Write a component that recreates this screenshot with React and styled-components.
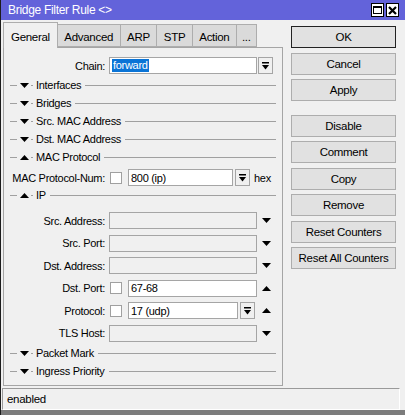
import styled, { createGlobalStyle } from "styled-components";

const GlobalStyle = createGlobalStyle`
  html, body {
    margin: 0;
    padding: 0;
    background: #f0f0f0;
  }
  body {
    font-family: "Liberation Sans", Arial, sans-serif;
    font-size: 11px;
    letter-spacing: -0.3px;
    color: #000;
  }
  * { box-sizing: border-box; }
`;

const DownTri = () => (
  <svg width="9" height="5" viewBox="0 0 9 5">
    <polygon points="0,0 9,0 4.5,5" fill="#000" />
  </svg>
);

const UpTri = () => (
  <svg width="9" height="5" viewBox="0 0 9 5">
    <polygon points="0,5 9,5 4.5,0" fill="#000" />
  </svg>
);

const DropIcon = () => (
  <svg width="7" height="8" viewBox="0 0 7 8">
    <rect x="0" y="0" width="7" height="1.5" fill="#000" />
    <polygon points="0,3 7,3 3.5,7.5" fill="#000" />
  </svg>
);

const App = () => {
  return (
    <>
      <GlobalStyle />
      <Window>
        <TitleBar>
          <span>Bridge Filter Rule &lt;&gt;</span>
          <TitleButtons>
            <TitleBtn>
              <MaxBox />
            </TitleBtn>
            <TitleBtn>
              <svg width="9" height="9" viewBox="0 0 9 9">
                <path d="M1 1 L8 8 M8 1 L1 8" stroke="#000" strokeWidth="2.2" />
              </svg>
            </TitleBtn>
          </TitleButtons>
        </TitleBar>

        <Body>
          <LeftCol>
            <TabRow>
              <Tab $active>General</Tab>
              <Tab>Advanced</Tab>
              <Tab>ARP</Tab>
              <Tab>STP</Tab>
              <Tab>Action</Tab>
              <Tab $pad={5}>...</Tab>
            </TabRow>
            <Panel>
              <FieldRow>
                <Label>Chain:</Label>
                <Input $w={148}>
                  <Selected>forward</Selected>
                </Input>
                <DropBtn $ml={1}>
                  <DropIcon />
                </DropBtn>
              </FieldRow>

              <Section $mt={2}>
                <Dash $w={7} />
                <TriBox><DownTri /></TriBox>
                <Dash $w={2} />
                <SectionLabel>Interfaces</SectionLabel>
                <Rule />
              </Section>
              <Section>
                <Dash $w={7} />
                <TriBox><DownTri /></TriBox>
                <Dash $w={2} />
                <SectionLabel>Bridges</SectionLabel>
                <Rule />
              </Section>
              <Section>
                <Dash $w={7} />
                <TriBox><DownTri /></TriBox>
                <Dash $w={2} />
                <SectionLabel>Src. MAC Address</SectionLabel>
                <Rule />
              </Section>
              <Section>
                <Dash $w={7} />
                <TriBox><DownTri /></TriBox>
                <Dash $w={2} />
                <SectionLabel>Dst. MAC Address</SectionLabel>
                <Rule />
              </Section>
              <Section>
                <Dash $w={7} />
                <TriBox><UpTri /></TriBox>
                <Dash $w={2} />
                <SectionLabel>MAC Protocol</SectionLabel>
                <Rule />
              </Section>

              <FieldRow $mt={3}>
                <Label>MAC Protocol-Num:</Label>
                <Check />
                <Input $w={105} $ml={6}>800 (ip)</Input>
                <DropBtn $ml={2}>
                  <DropIcon />
                </DropBtn>
                <Unit>hex</Unit>
              </FieldRow>

              <Section>
                <Dash $w={7} />
                <TriBox><UpTri /></TriBox>
                <Dash $w={2} />
                <SectionLabel>IP</SectionLabel>
                <Rule />
              </Section>

              <FieldRow $mt={8}>
                <Label>Src. Address:</Label>
                <Input $w={148} $disabled />
                <Arrow $ml={5}><DownTri /></Arrow>
              </FieldRow>
              <FieldRow $mt={5.5}>
                <Label>Src. Port:</Label>
                <Input $w={148} $disabled />
                <Arrow $ml={5}><DownTri /></Arrow>
              </FieldRow>
              <FieldRow $mt={5.5}>
                <Label>Dst. Address:</Label>
                <Input $w={148} $disabled />
                <Arrow $ml={5}><DownTri /></Arrow>
              </FieldRow>
              <FieldRow $mt={5.5}>
                <Label>Dst. Port:</Label>
                <Check />
                <Input $w={129} $ml={6}>67-68</Input>
                <Arrow $ml={5}><UpTri /></Arrow>
              </FieldRow>
              <FieldRow $mt={5.5}>
                <Label>Protocol:</Label>
                <Check />
                <Input $w={110} $ml={6}>17 (udp)</Input>
                <DropBtn $ml={2}>
                  <DropIcon />
                </DropBtn>
                <Arrow $ml={7}><UpTri /></Arrow>
              </FieldRow>
              <FieldRow $mt={5.5}>
                <Label>TLS Host:</Label>
                <Input $w={148} $disabled />
                <Arrow $ml={5}><DownTri /></Arrow>
              </FieldRow>

              <Section $mt={2.5}>
                <Dash $w={7} />
                <TriBox><DownTri /></TriBox>
                <Dash $w={2} />
                <SectionLabel>Packet Mark</SectionLabel>
                <Rule />
              </Section>
              <Section>
                <Dash $w={7} />
                <TriBox><DownTri /></TriBox>
                <Dash $w={2} />
                <SectionLabel>Ingress Priority</SectionLabel>
                <Rule />
              </Section>
            </Panel>
          </LeftCol>

          <ButtonCol>
            <Button $default>OK</Button>
            <Button>Cancel</Button>
            <Button>Apply</Button>
            <Button $mt={9}>Disable</Button>
            <Button>Comment</Button>
            <Button>Copy</Button>
            <Button>Remove</Button>
            <Button>Reset Counters</Button>
            <Button>Reset All Counters</Button>
          </ButtonCol>
        </Body>

        <StatusBar>enabled</StatusBar>
        <BottomStrip />
      </Window>
    </>
  );
};

const Window = styled.div`
  width: 405px;
  height: 415px;
  display: flex;
  flex-direction: column;
  border-left: 1px solid #1c1c1c;
  background: #f0f0f0;
  overflow: hidden;
`;

const TitleBar = styled.div`
  height: 20px;
  flex: none;
  display: flex;
  align-items: center;
  padding-left: 7px;
  background: #6363da;
  color: #fff;
  font-size: 12px;
`;

const TitleButtons = styled.div`
  margin-left: auto;
  margin-right: 6px;
  display: flex;
  gap: 2px;
`;

const TitleBtn = styled.div`
  width: 13px;
  height: 14px;
  background: #fff;
  border: 1px solid #000;
  display: flex;
  align-items: center;
  justify-content: center;
`;

const MaxBox = styled.div`
  width: 9px;
  height: 8px;
  border: 1px solid #000;
  border-top-width: 2px;
`;

const Body = styled.div`
  height: 368px;
  flex: none;
  display: flex;
`;

const LeftCol = styled.div`
  width: 280px;
  margin-left: 2px;
  padding-top: 3px;
  padding-bottom: 2px;
  display: flex;
  flex-direction: column;
`;

const TabRow = styled.div`
  height: 24px;
  display: flex;
  align-items: flex-end;
`;

const Tab = styled.div`
  position: relative;
  z-index: ${(p) => (p.$active ? 1 : 0)};
  height: ${(p) => (p.$active ? "26px" : "23px")};
  margin-bottom: ${(p) => (p.$active ? "-1px" : "0")};
  padding: ${(p) => (p.$active ? "3px 7px 0" : `2px ${p.$pad || 6.5}px 0`)};
  display: flex;
  align-items: center;
  font-size: 11.5px;
  background: ${(p) => (p.$active ? "#f0f0f0" : "#dadada")};
  border: 1px solid #adadad;
  border-left: ${(p) => (p.$active ? "1px solid #adadad" : "none")};
  border-bottom: ${(p) => (p.$active ? "none" : "1px solid #adadad")};
`;

const Panel = styled.div`
  flex: 1;
  border: 1px solid #a5a5a5;
  background: #f0f0f0;
  padding-top: 9px;
  display: flex;
  flex-direction: column;
`;

const FieldRow = styled.div`
  height: 17px;
  margin-top: ${(p) => p.$mt || 0}px;
  display: flex;
  align-items: center;
`;

const Label = styled.div`
  width: 101px;
  margin-right: 4px;
  text-align: right;
  white-space: nowrap;
`;

const Input = styled.div`
  width: ${(p) => p.$w}px;
  height: 17px;
  margin-left: ${(p) => p.$ml || 0}px;
  padding-left: 2px;
  display: flex;
  align-items: center;
  background: ${(p) => (p.$disabled ? "#f0f0f0" : "#fff")};
  border: 1px solid #a5a5a5;
  white-space: nowrap;
`;

const Selected = styled.span`
  background: #0a74d6;
  color: #fff;
  padding: 0 1px;
  line-height: 13px;
`;

const DropBtn = styled.div`
  width: 15px;
  height: 17px;
  margin-left: ${(p) => p.$ml || 0}px;
  display: flex;
  align-items: center;
  justify-content: center;
  background: #f0f0f0;
  border: 1px solid #a5a5a5;
`;

const Check = styled.div`
  width: 12px;
  height: 12px;
  margin-left: 1px;
  background: #fff;
  border: 1px solid #a0a0a0;
`;

const Unit = styled.span`
  margin-left: 4px;
`;

const Arrow = styled.div`
  margin-left: ${(p) => p.$ml || 0}px;
  display: flex;
  align-items: center;
`;

const Section = styled.div`
  height: 18px;
  margin-top: ${(p) => p.$mt || 0}px;
  padding: 0 6px;
  display: flex;
  align-items: center;
`;

const Dash = styled.div`
  width: ${(p) => p.$w}px;
  height: 1px;
  background: #a0a0a0;
  flex: none;
`;

const TriBox = styled.div`
  margin: 0 2px 0 3px;
  display: flex;
  align-items: center;
`;

const SectionLabel = styled.span`
  margin-left: 3px;
  margin-right: 4px;
  white-space: nowrap;
`;

const Rule = styled.div`
  flex: 1;
  height: 1px;
  background: #a0a0a0;
`;

const ButtonCol = styled.div`
  width: 105px;
  margin-left: 8px;
  padding-top: 6px;
  display: flex;
  flex-direction: column;
  gap: 4.5px;
`;

const Button = styled.div`
  height: 22px;
  margin-top: ${(p) => p.$mt || 0}px;
  display: flex;
  align-items: center;
  justify-content: center;
  background: #e1e1e1;
  border: 1px solid ${(p) => (p.$default ? "#222" : "#adadad")};
  font-size: 11.5px;
`;

const StatusBar = styled.div`
  height: 22px;
  width: 398px;
  margin-left: 1px;
  flex: none;
  display: flex;
  align-items: center;
  padding-left: 4px;
  border-top: 1px solid #9a9a9a;
  border-left: 1px solid #9a9a9a;
  border-right: 1px solid #fff;
  border-bottom: 1px solid #fff;
  font-size: 11.5px;
`;

const BottomStrip = styled.div`
  flex: 1;
  background: #7c7c7c;
`;

export default App;
